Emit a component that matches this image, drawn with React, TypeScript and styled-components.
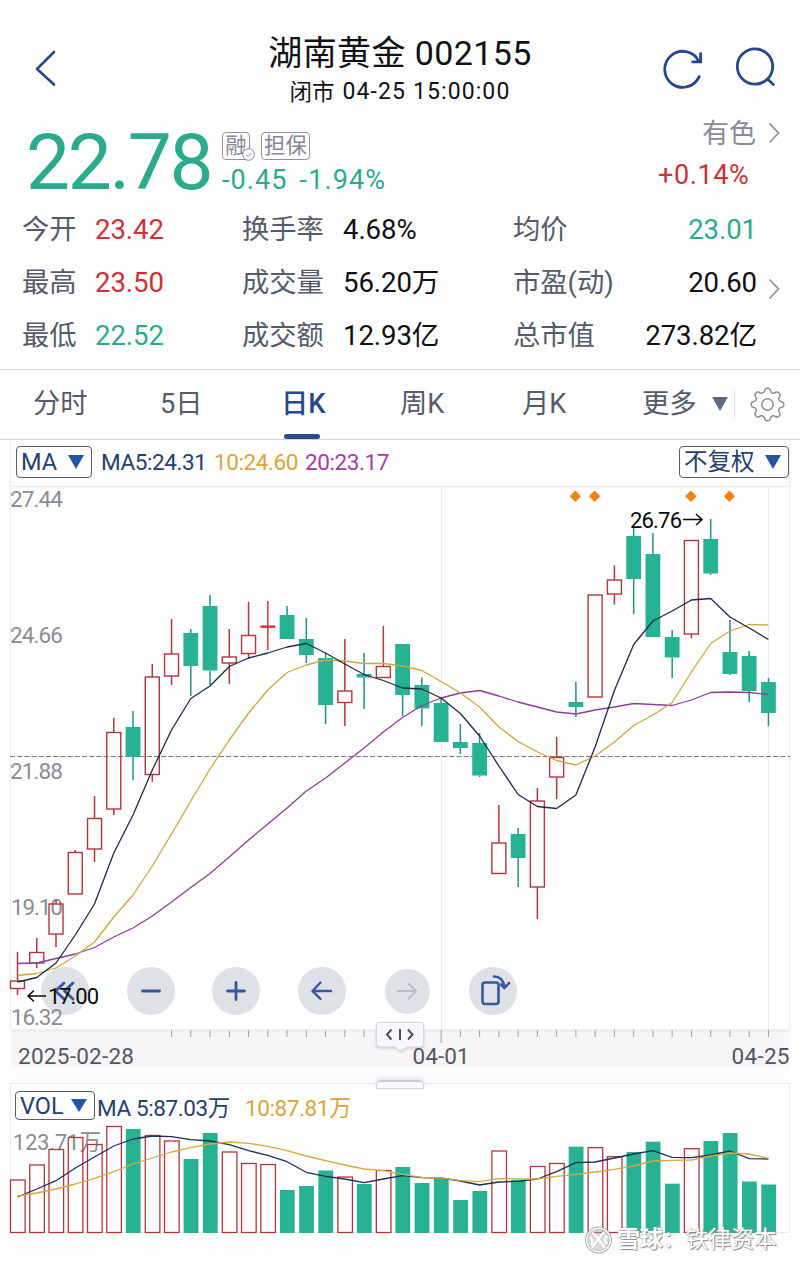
import React from 'react';
import styled, { createGlobalStyle } from 'styled-components';

const C = {
  navy: '#27498a',
  ink: '#111216',
  slate: '#555b6b',
  grey: '#8a8d94',
  red: '#cb3238',
  green: '#2cab8c',
  candleGreen: '#27b294',
  candleRed: '#b2363f',
  gold: '#d9a53a',
  purple: '#a23cab',
  line: '#d9dadd',
  faint: '#ebebee',
};
const FONT = `Roboto, 'Noto Sans CJK SC', sans-serif`;

const Global = createGlobalStyle`
  * { box-sizing: border-box; }
  body { margin: 0; background: #fff; font-family: ${FONT}; color: ${C.ink}; }
  svg { display: block; }
`;

const Page = styled.main`
  width: 800px;
  height: 1265px;
  overflow: hidden;
  background: #fefefe;
`;

/* ---------- header ---------- */
const Header = styled.header`
  display: grid;
  grid-template-columns: 200px 400px 200px;
  height: 116px;
  padding-top: 32px;
`;
const BackButton = styled.div`
  padding: 18px 0 0 34px;
`;
const TitleBlock = styled.div`
  display: flex;
  flex-direction: column;
  align-items: center;
`;
const Title = styled.h1`
  margin: 0;
  font-weight: 400;
  font-size: 34px;
  line-height: 42px;
  letter-spacing: 0.4px;
  white-space: nowrap;
`;
const Subtitle = styled.div`
  display: flex;
  gap: 8px;
  margin-top: 5px;
  font-size: 22.5px;
  line-height: 26px;
  white-space: nowrap;
`;
const Timestamp = styled.time`
  font-size: 23px;
  letter-spacing: 1.1px;
`;
const HeaderActions = styled.div`
  display: flex;
  gap: 32px;
  padding: 14px 0 0 60px;
`;

/* ---------- quote ---------- */
const Quote = styled.section`
  display: flex;
  height: 86px;
  padding-left: 25px;
`;
const Price = styled.div`
  width: 197px;
  margin-top: 6px;
  padding-left: 1px;
  font-size: 78.5px;
  line-height: 80px;
  letter-spacing: -2.4px;
  color: ${C.green};
`;
const ChangeBlock = styled.div`
  flex: 1;
  padding-top: 16px;
`;
const Tags = styled.div`
  display: flex;
  gap: 11px;
`;
const Tag = styled.span<{ $w: number }>`
  position: relative;
  width: ${p => p.$w}px;
  height: 28px;
  border: 1px solid #8f919e;
  border-radius: 4px;
  font-size: 21.5px;
  line-height: 26px;
  text-align: center;
  color: #858796;
  white-space: nowrap;
`;
const TagCheck = styled.svg`
  position: absolute;
  right: -6px;
  bottom: -2px;
`;
const Change = styled.div`
  display: flex;
  gap: 12px;
  margin-top: 4px;
  font-size: 27px;
  line-height: 32px;
  letter-spacing: 1.1px;
  color: ${C.green};
`;
const Sector = styled.div`
  display: flex;
  flex-direction: column;
  width: 150px;
  padding-left: 1px;
`;
const SectorName = styled.div`
  display: flex;
  align-items: center;
  gap: 12px;
  height: 36px;
  padding-left: 51px;
  color: ${C.grey};
  font-size: 27px;
  line-height: 38px;
`;
const SectorChange = styled.div`
  margin-top: 7px;
  padding-left: 7px;
  font-size: 27px;
  line-height: 32px;
  letter-spacing: 0.6px;
  color: ${C.red};
`;

/* ---------- stats ---------- */
const Stats = styled.section`
  position: relative;
  display: grid;
  grid-template-columns: 73px 147px 101px 170px 130px 114px;
  grid-auto-rows: 53.4px;
  align-items: center;
  height: 168px;
  padding: 1px 0 0 22px;
  border-bottom: 1px solid ${C.line};
  line-height: 40px;
  white-space: nowrap;
`;
const StatLabel = styled.span`
  font-size: 27.3px;
  color: ${C.slate};
`;
const StatValue = styled.span<{ $color?: string; $right?: boolean }>`
  font-size: 27.6px;
  letter-spacing: -0.1px;
  color: ${p => p.$color || '#101013'};
  text-align: ${p => (p.$right ? 'right' : 'left')};
`;
const StatsMore = styled.svg`
  position: absolute;
  left: 768px;
  top: 76px;
`;

/* ---------- tabs ---------- */
const Tabs = styled.nav`
  display: flex;
  height: 70px;
  padding-left: 33px;
  border-bottom: 1px solid #d0d2d6;
`;
const Tab = styled.div<{ $w: number; $active?: boolean }>`
  display: flex;
  flex-direction: column;
  align-items: flex-start;
  justify-content: space-between;
  width: ${p => p.$w}px;
  padding-top: 14px;
  font-size: 27.3px;
  line-height: 40px;
  font-weight: ${p => (p.$active ? 500 : 400)};
  color: ${p => (p.$active ? C.navy : C.slate)};
  white-space: nowrap;
`;
const ActiveBar = styled.i`
  width: 36px;
  height: 5px;
  margin-left: 3px;
  border-radius: 3px;
  background: #2f4d8c;
`;
const MoreTab = styled(Tab)`
  flex-direction: row;
  justify-content: flex-start;
  gap: 15px;
`;
const Settings = styled.div`
  height: 30px;
  margin-top: 19px;
  padding-left: 15px;
  border-left: 1px solid #dcdde0;
`;
const GearIcon = styled.svg`
  margin-top: -2px;
`;
const Caret = styled.i<{ $color: string; $size: number }>`
  width: 0;
  height: 0;
  border-left: ${p => p.$size / 2}px solid transparent;
  border-right: ${p => p.$size / 2}px solid transparent;
  border-top: ${p => p.$size * 0.84}px solid ${p => p.$color};
`;
const TabCaret = styled(Caret)`
  margin-top: 13px;
`;

/* ---------- charts ---------- */
const ChartHeader = styled.div<{ $h: number; $top: number }>`
  display: flex;
  align-items: flex-start;
  height: ${p => p.$h}px;
  margin: 0 10px;
  padding: ${p => p.$top}px 0 0 5px;
  border: solid ${C.faint};
  border-width: 0 1px;
`;
const Picker = styled.div<{ $w: number; $h: number }>`
  display: flex;
  align-items: center;
  justify-content: space-between;
  width: ${p => p.$w}px;
  height: ${p => p.$h}px;
  padding: 0 7px 0 4px;
  border: 1px solid #5d5f66;
  border-radius: 4px;
  font-size: 23.5px;
  color: #24406f;
  white-space: nowrap;
  line-height: 28px;
`;
const Legend = styled.div<{ $ml: number; $top: number }>`
  flex: 1;
  display: flex;
  margin-left: ${p => p.$ml}px;
  padding-top: ${p => p.$top}px;
  font-size: 22.5px;
  line-height: 30px;
  white-space: nowrap;
`;
const LegendItem = styled.span<{ $color: string; $w: number }>`
  width: ${p => p.$w}px;
  letter-spacing: -0.4px;
  color: ${p => p.$color};
`;
const MainChart = styled.section`
  position: relative;
  height: 543px;
`;
const ChartSvg = styled.svg`
  position: relative;
  z-index: 1;
  font-family: ${FONT};
  overflow: visible;
`;
const Toolbar = styled.div`
  position: absolute;
  left: 41px;
  top: 481px;
  display: grid;
  grid-template-columns: repeat(6, 48px);
  column-gap: 37.6px;
  align-items: center;
  justify-items: center;
`;
const RoundButton = styled.div<{ $size?: number }>`
  display: flex;
  align-items: center;
  justify-content: center;
  width: ${p => p.$size || 48}px;
  height: ${p => p.$size || 48}px;
  border-radius: 50%;
  background: #dee1e5;
`;
const TimeAxis = styled.div`
  position: relative;
  height: 54px;
`;
const Handle = styled.div`
  position: absolute;
  z-index: 2;
  left: 376px;
  top: -7px;
  filter: drop-shadow(0 1px 1px rgba(120, 124, 150, 0.35));
`;
const Grip = styled.div`
  position: absolute;
  z-index: 2;
  left: 376px;
  top: 51px;
  width: 48px;
  height: 9px;
  border: 1px solid #ced0da;
  border-top: 2px solid #cbcdd9;
  border-radius: 5px 5px 0 0;
  background: #fafaff;
  box-shadow: 0 -3px 3px rgba(200, 202, 222, 0.35);
`;
const VolumePanel = styled.section`
  height: 182px;
`;
const VolumeHeader = styled(ChartHeader)`
  border-top-width: 1px;
  padding-left: 4px;
`;
const Watermark = styled.div`
  position: absolute;
  left: 585px;
  top: 1225px;
  z-index: 3;
  display: flex;
  align-items: center;
  gap: 5px;
  font-size: 23px;
  line-height: 30px;
  color: #fff;
  letter-spacing: -0.2px;
  white-space: nowrap;
  text-shadow: 1px 1px 1px #85888b, 0 0 2px #a5a8aa;
`;

/* ---------- data ---------- */
const STEP = 19.255;
const cx = (i: number) => 17.5 + i * STEP;
const TOP = 486;

type Candle = [boolean, number, number, number, number];
// [rising, high, body top, body bottom, low]
const candles: Candle[] = [
  [true, 952, 981, 988.5, 995], [true, 938, 952.5, 963, 968], [true, 900, 904, 934, 947],
  [true, 850, 852.5, 894, 894], [true, 796, 818.5, 849, 862], [true, 718, 732.5, 809, 815],
  [false, 711, 727, 757, 780], [true, 664, 677, 774.5, 782], [true, 619, 654, 676, 685],
  [false, 629, 633, 666, 696], [false, 595, 606, 670.5, 685], [true, 629, 657, 663, 684],
  [true, 602, 635.5, 653.5, 658], [true, 601, 626, 627, 650], [false, 606, 615, 639, 639],
  [false, 618, 639, 655, 663], [false, 653, 658, 705, 724], [true, 639, 691, 702.5, 726],
  [false, 653, 674, 677.5, 709], [true, 626, 666.5, 677.5, 677.5], [false, 644, 644, 695, 716],
  [false, 677.5, 685, 708.5, 726], [false, 697, 703, 742, 742], [false, 724, 742, 748, 754],
  [false, 733, 743, 775.5, 777], [true, 805, 843, 873.5, 873.5], [false, 828, 834, 858, 887],
  [true, 788, 801, 887, 919], [true, 737, 757.5, 777, 799], [false, 682, 702, 707, 717],
  [true, 595, 595, 697, 697], [true, 565.5, 580, 594, 604.5], [false, 528, 536, 579, 614],
  [false, 533, 554, 637, 637], [false, 630, 637, 657.5, 678], [true, 540.5, 540.5, 634, 638.5],
  [false, 519, 539, 573.5, 575], [false, 620, 652, 674, 675], [false, 651, 656, 691, 702],
  [false, 678, 682, 713, 726],
];
const ma5 = [982, 977.5, 963, 935, 904, 853, 815, 770, 730, 698.5, 686, 666.5, 658, 653, 647, 643.5, 653, 664, 674.5, 680.5, 688, 689, 698, 713.5, 736, 766, 794.5, 806.5, 808.5, 795, 747, 690.5, 644.5, 621, 611, 600, 598.5, 617, 628, 639.5];
const ma10 = [975.5, 973.5, 968, 956, 942, 917, 895, 866, 834, 801, 769, 740, 713, 690, 672.5, 665, 660, 661, 663.5, 663.5, 666, 670.5, 681.5, 693, 707, 727, 741.5, 752, 760.5, 765, 756, 742, 725.5, 715, 702.5, 672, 643.5, 631, 624.5, 625];
const ma20 = [963.5, 963, 958.5, 954, 947.5, 937, 928, 916, 902, 887.5, 873.5, 857, 840, 824, 808, 791, 778, 763, 748, 732, 717.5, 705.5, 698, 693, 690.5, 696, 702, 707, 712, 714, 710, 707, 703.5, 704.5, 705.5, 700, 692.5, 692, 692.5, 694.5];

const volTops = [1180, 1165, 1149.5, 1137.5, 1144.5, 1126.5, 1129, 1135.5, 1141, 1159, 1133, 1152, 1163.5, 1164.5, 1190, 1186, 1170.5, 1177, 1184, 1170.5, 1167, 1183, 1178.5, 1200, 1191, 1151, 1180, 1166.5, 1163.5, 1146.7, 1147.7, 1156.7, 1152, 1141.7, 1183.7, 1148.7, 1141, 1133, 1181.5, 1184.5];
const vma5 = [1197, 1189, 1180.7, 1168, 1157, 1146, 1139, 1136, 1136.7, 1139.7, 1141, 1144.7, 1150.7, 1155.3, 1161.7, 1172.3, 1176.3, 1179, 1182.7, 1179, 1175.7, 1177.7, 1178, 1181, 1185, 1182, 1181.3, 1179, 1171.7, 1162.7, 1162, 1158, 1154, 1150.7, 1157.3, 1157.7, 1155, 1151, 1158.7, 1159];
const vma10 = [1196, 1193, 1189, 1184, 1178.3, 1171.7, 1164, 1158, 1152, 1147.7, 1144, 1142, 1143.3, 1146.3, 1150.7, 1156, 1160.7, 1165, 1169, 1170.7, 1174.3, 1177.3, 1178, 1180.7, 1181.7, 1178.7, 1179, 1179, 1176.3, 1174.3, 1172, 1169.3, 1166, 1161, 1160.3, 1160, 1156, 1153, 1154, 1158.3];

const points = (values: number[], top: number) =>
  values.map((v, i) => `${cx(i).toFixed(1)},${(v - top).toFixed(1)}`).join(' ');

function Line({ values, top, color }: { values: number[]; top: number; color: string }) {
  return <polyline points={points(values, top)} fill="none" stroke={color} strokeWidth={1.3} strokeLinejoin="round" />;
}

function CandleMark({ c, i }: { c: Candle; i: number }) {
  const [up, hi, bt, bb, lo] = c;
  const x = cx(i);
  const stroke = up ? C.candleRed : '#1f9380';
  const doji = up && bb - bt < 2;
  return (
    <g stroke={doji ? '#dc2f36' : stroke} strokeWidth={1.5}>
      {hi < bt && <path d={`M${x} ${hi - TOP}V${bt - TOP}`} />}
      {lo > bb && <path d={`M${x} ${bb - TOP}V${lo - TOP}`} />}
      {doji ? (
        <path d={`M${x - 7.5} ${bt + 0.7 - TOP}h15`} strokeWidth={2.4} />
      ) : up ? (
        <rect x={x - 7} y={bt - TOP} width={14} height={bb - bt} fill="none" strokeWidth={1.4} />
      ) : (
        <rect x={x - 7.4} y={bt - TOP} width={14.8} height={bb - bt} fill={C.candleGreen} stroke="none" />
      )}
    </g>
  );
}

const gear = (() => {
  const pts: string[] = [];
  for (let k = 0; k < 160; k++) {
    const t = (k / 160) * Math.PI * 2;
    const r = 14.4 + 1.9 * Math.tanh(1.7 * Math.cos(8 * t)) / Math.tanh(1.7);
    pts.push(`${(17.5 + r * Math.sin(t)).toFixed(2)} ${(17.5 - r * Math.cos(t)).toFixed(2)}`);
  }
  return `M${pts.join('L')}Z`;
})();

const Chevron = () => (
  <svg width="12" height="22" viewBox="0 0 12 22" fill="none" stroke="#8d9096" strokeWidth="1.7">
    <path d="M1.5 .5L10.5 10L1.5 19.5" />
  </svg>
);

function PriceChart() {
  return (
    <ChartSvg width="800" height="543" viewBox="0 0 800 543">
      <g stroke={C.faint} strokeWidth="1">
        <path d="M10.5 .5H789.5V543M10.5 .5V543M441.5 0V543M768.5 0V543" fill="none" />
      </g>
      <g fill={C.grey} fontSize="22.5">
        <text x="10" y="21" textLength="53">27.44</text>
        <text x="10" y="157" textLength="53">24.66</text>
        <text x="10" y="293" textLength="53">21.88</text>
        <text x="11" y="429" textLength="52">19.10</text>
        <text x="11" y="539" textLength="52">16.32</text>
      </g>
      <path d="M10 270.5H790" stroke="#77797e" strokeWidth="1.1" strokeDasharray="5 2.2" />
      {candles.map((c, i) => <CandleMark key={i} c={c} i={i} />)}
      <Line values={ma20} top={TOP} color="#8d3d97" />
      <Line values={ma10} top={TOP} color="#cba83b" />
      <Line values={ma5} top={TOP} color="#1c2b47" />
      {[29, 30, 35, 37].map(i => (
        <path key={i} d={`M${cx(i) - 0.5} 6L${cx(i) + 3.7} 10.2L${cx(i) - 0.5} 14.4L${cx(i) - 4.7} 10.2Z`} fill="#f5820f" stroke="#f5820f" strokeWidth="2.2" strokeLinejoin="round" />
      ))}
      <g fill="#0c0c0e" fontSize="22">
        <text x="630" y="42" textLength="52">26.76</text>
        <text x="48" y="518" textLength="51">17.00</text>
      </g>
      <g fill="none" stroke="#0c0c0e" strokeWidth="1.5">
        <path d="M683 33.5H702M696 28L702 33.5L696 39" />
        <path d="M46 510H28M34 504.5L28 510L34 515.5" />
      </g>
    </ChartSvg>
  );
}

function VolumeChart() {
  const top = 1122;
  return (
    <ChartSvg width="800" height="111" viewBox="0 0 800 111">
      <path d="M10.5 0V110.5H789.5V0" fill="none" stroke={C.faint} />
      <text x="13" y="28" fontSize="22.5" fill={C.grey} textLength="88" lengthAdjust="spacingAndGlyphs">123.71万</text>
      {volTops.map((v, i) =>
        candles[i][0] ? (
          <rect key={i} x={cx(i) - 7} y={v - top} width={14.6} height={1232.5 - v} fill="none" stroke={C.candleRed} strokeWidth={1.3} />
        ) : (
          <rect key={i} x={cx(i) - 7.2} y={v - top} width={14.8} height={1233 - v} fill={C.candleGreen} />
        )
      )}
      <Line values={vma5} top={top} color="#1e2f5a" />
      <Line values={vma10} top={top} color="#d8a93c" />
    </ChartSvg>
  );
}

const stroke = { fill: 'none', stroke: '#36579f', strokeWidth: 2.8, strokeLinecap: 'round', strokeLinejoin: 'round' } as const;

export default function App() {
  return (
    <Page>
      <Global />
      <Header>
        <BackButton>
          <svg width="24" height="38" viewBox="0 0 24 38" fill="none" stroke={C.navy} strokeWidth="2.6" strokeLinecap="round" strokeLinejoin="round">
            <path d="M20 2L3 19L20 34.5" />
          </svg>
        </BackButton>
        <TitleBlock>
          <Title>湖南黄金 002155</Title>
          <Subtitle>闭市<Timestamp>04-25 15:00:00</Timestamp></Subtitle>
        </TitleBlock>
        <HeaderActions>
          <svg width="42" height="44" viewBox="0 0 42 44" fill="none" stroke={C.navy} strokeWidth="2.8">
            <path d="M39.2 30.6A18 18 0 1 1 38.6 14.8" strokeLinecap="round" />
            <path d="M40.6 6.5V15.8H31.5" />
          </svg>
          <svg width="42" height="44" viewBox="0 0 42 44" fill="none" stroke={C.navy} strokeWidth="2.8" strokeLinecap="round">
            <circle cx="21" cy="20.5" r="17.7" />
            <path d="M33.5 33L39.3 38.6" />
          </svg>
        </HeaderActions>
      </Header>

      <Quote>
        <Price>22.78</Price>
        <ChangeBlock>
          <Tags>
            <Tag $w={28}>
              融
              <TagCheck width="13" height="13" viewBox="0 0 13 13" fill="none" stroke="#858796">
                <circle cx="6.5" cy="6.5" r="5.8" fill="#fff" />
                <path d="M4 6.5L6 8.5L9.5 5" />
              </TagCheck>
            </Tag>
            <Tag $w={49}>担保</Tag>
          </Tags>
          <Change><span>-0.45</span><span>-1.94%</span></Change>
        </ChangeBlock>
        <Sector>
          <SectorName>有色<Chevron /></SectorName>
          <SectorChange>+0.14%</SectorChange>
        </Sector>
      </Quote>

      <Stats>
        <StatLabel>今开</StatLabel><StatValue $color={C.red}>23.42</StatValue>
        <StatLabel>换手率</StatLabel><StatValue>4.68%</StatValue>
        <StatLabel>均价</StatLabel><StatValue $color={C.green} $right>23.01</StatValue>
        <StatLabel>最高</StatLabel><StatValue $color={C.red}>23.50</StatValue>
        <StatLabel>成交量</StatLabel><StatValue>56.20万</StatValue>
        <StatLabel>市盈(动)</StatLabel><StatValue $right>20.60</StatValue>
        <StatLabel>最低</StatLabel><StatValue $color={C.green}>22.52</StatValue>
        <StatLabel>成交额</StatLabel><StatValue>12.93亿</StatValue>
        <StatLabel>总市值</StatLabel><StatValue $right>273.82亿</StatValue>
        <StatsMore width="12" height="22" viewBox="0 0 12 22" fill="none" stroke="#8d9096" strokeWidth="1.7">
          <path d="M1.5 1.5L10.5 11L1.5 20.5" />
        </StatsMore>
      </Stats>

      <Tabs>
        <Tab $w={127}>分时</Tab>
        <Tab $w={121}>5日</Tab>
        <Tab $w={119} $active>日K<ActiveBar /></Tab>
        <Tab $w={122}>周K</Tab>
        <Tab $w={120}>月K</Tab>
        <MoreTab $w={92}>更多<TabCaret $color="#606a86" $size={17} /></MoreTab>
        <Settings>
          <GearIcon width="36" height="36" viewBox="0 0 36 36" fill="none" stroke="#8c8f99" strokeWidth="1.5">
            <path d={gear} />
            <circle cx="17.5" cy="17.5" r="5.7" />
          </GearIcon>
        </Settings>
      </Tabs>

      <ChartHeader $h={46} $top={6}>
        <Picker $w={76} $h={32}>MA<Caret $color="#2655a4" $size={17} /></Picker>
        <Legend $ml={9} $top={1}>
          <LegendItem $color="#24406f" $w={113}>MA5:24.31</LegendItem>
          <LegendItem $color={C.gold} $w={91}>10:24.60</LegendItem>
          <LegendItem $color={C.purple} $w={90}>20:23.17</LegendItem>
        </Legend>
        <Picker $w={110} $h={32}>不复权<Caret $color="#2655a4" $size={17} /></Picker>
      </ChartHeader>

      <MainChart>
        <Toolbar>
          <RoundButton>
            <svg width="24" height="24" viewBox="0 0 24 24" {...stroke}><path d="M11 4L2.5 12L11 20M20 4L11.5 12L20 20" /></svg>
          </RoundButton>
          <RoundButton>
            <svg width="24" height="24" viewBox="0 0 24 24" {...stroke}><path d="M3.5 12H20.5" /></svg>
          </RoundButton>
          <RoundButton>
            <svg width="24" height="24" viewBox="0 0 24 24" {...stroke}><path d="M3.5 12H20.5M12 3.5V20.5" /></svg>
          </RoundButton>
          <RoundButton>
            <svg width="24" height="24" viewBox="0 0 24 24" {...stroke} strokeWidth={2.4}><path d="M21 12H2.5M10.5 3.5L2.5 12L10.5 20" /></svg>
          </RoundButton>
          <RoundButton $size={45}>
            <svg width="24" height="24" viewBox="0 0 24 24" {...stroke} stroke="#b8bcc7" strokeWidth={1.9}><path d="M3 12H21M13.5 4.5L21 12L13.5 19.5" /></svg>
          </RoundButton>
          <RoundButton>
            <svg width="36" height="36" viewBox="0 0 36 36" {...stroke} strokeWidth={2.6}>
              <rect x="7.5" y="9.5" width="16" height="21.5" rx="2.5" />
              <path d="M19 3.5C25 3.5 28.5 7.5 29.5 14M26 11.5L29.5 15L34 10" />
            </svg>
          </RoundButton>
        </Toolbar>
        <PriceChart />
      </MainChart>

      <TimeAxis>
        <Handle>
          <svg width="48" height="30" viewBox="0 0 48 30">
            <path d="M3 .5H45Q47.5 .5 47.5 3V22Q47.5 25 45 25H31L25 29L19 25H3Q.5 25 .5 22V3Q.5 .5 3 .5Z" fill="#f8f8fc" stroke="#d6d8e0" />
            <path d="M15.5 7.5L11 12.5L15.5 17.5M24 7V18M32 7.5L36.5 12.5L32 17.5" fill="none" stroke="#4d5057" strokeWidth="2" />
          </svg>
        </Handle>
        <Grip />
        <ChartSvg width="800" height="54" viewBox="0 0 800 54">
          <rect x="11" y="0" width="779" height="38" fill="#f8f5f7" />
          <rect x="11" y="0" width="779" height="3" fill="#efeff1" />
          <rect x="11" y="38" width="779" height="16" fill="#fdfbfd" />
          {Array.from({ length: 32 }, (_, k) => k + 8).map(i => (
            <path key={i} d={`M${cx(i)} 1V${i === 22 ? 14 : 8}`} stroke="#a0a2a8" strokeWidth="1" />
          ))}
          <g fill="#515761" fontSize="22.5">
            <text x="18" y="35" textLength="116">2025-02-28</text>
            <text x="412.5" y="35" textLength="57">04-01</text>
            <text x="731.5" y="35" textLength="58">04-25</text>
          </g>
        </ChartSvg>
      </TimeAxis>

      <VolumePanel>
        <VolumeHeader $h={39} $top={7}>
          <Picker $w={80} $h={29}>VOL<Caret $color="#2655a4" $size={16} /></Picker>
          <Legend $ml={2} $top={2}>
            <LegendItem $color="#24406f" $w={148}>MA 5:87.03万</LegendItem>
            <LegendItem $color={C.gold} $w={110}>10:87.81万</LegendItem>
          </Legend>
        </VolumeHeader>
        <VolumeChart />
      </VolumePanel>

      <Watermark>
        <svg width="27" height="28" viewBox="0 0 27 28" fill="none" stroke="#fff" strokeWidth="2">
          <circle cx="13.5" cy="14" r="12" fill="#aaadb0" fillOpacity=".45" stroke="#a9abae" strokeWidth="3" />
          <circle cx="13.5" cy="14" r="11.8" strokeWidth="1.5" />
          <path d="M7 6Q14 13 20 22M19 6Q13 12 7 22M5 11Q9 15 6 19M22 10Q18 14 22 18" />
        </svg>
        <span><b>雪球</b>：铁律资本</span>
      </Watermark>
    </Page>
  );
}
